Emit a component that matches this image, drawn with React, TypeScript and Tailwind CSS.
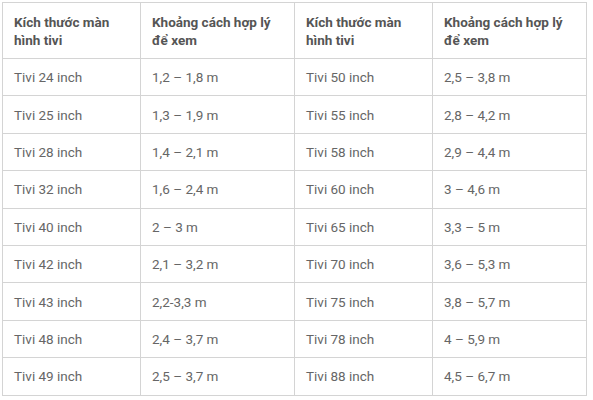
const rows: [string, string, string, string][] = [
  ["Tivi 24 inch", "1,2 – 1,8 m", "Tivi 50 inch", "2,5 – 3,8 m"],
  ["Tivi 25 inch", "1,3 – 1,9 m", "Tivi 55 inch", "2,8 – 4,2 m"],
  ["Tivi 28 inch", "1,4 – 2,1 m", "Tivi 58 inch", "2,9 – 4,4 m"],
  ["Tivi 32 inch", "1,6 – 2,4 m", "Tivi 60 inch", "3 – 4,6 m"],
  ["Tivi 40 inch", "2 – 3 m", "Tivi 65 inch", "3,3 – 5 m"],
  ["Tivi 42 inch", "2,1 – 3,2 m", "Tivi 70 inch", "3,6 – 5,3 m"],
  ["Tivi 43 inch", "2,2-3,3 m", "Tivi 75 inch", "3,8 – 5,7 m"],
  ["Tivi 48 inch", "2,4 – 3,7 m", "Tivi 78 inch", "4 – 5,9 m"],
  ["Tivi 49 inch", "2,5 – 3,7 m", "Tivi 88 inch", "4,5 – 6,7 m"],
];

const headers = ["Kích thước màn hình tivi", "Khoảng cách hợp lý để xem", "Kích thước màn hình tivi", "Khoảng cách hợp lý để xem"];

export default function App() {
  return (
    <div className="w-[593px] h-[400px] bg-white pl-[2px] pt-[2px] [font-family:Roboto,'Liberation_Sans',sans-serif]">
      <table className="w-[585px] table-fixed border-collapse text-[13.5px]">
        <colgroup>
          <col className="w-[138px]" />
          <col className="w-[154px]" />
          <col className="w-[138px]" />
          <col className="w-[154px]" />
        </colgroup>
        <thead>
          <tr className="h-[56px]">
            {headers.map((h, i) => (
              <th key={i} className="border border-[#d4d4d4] px-[11px] pr-[16px] text-left align-middle font-bold leading-[18px] text-[#555]">
                {h}
              </th>
            ))}
          </tr>
        </thead>
        <tbody>
          {rows.map((r, i) => (
            <tr key={i} className="h-[37.4px]">
              {r.map((c, j) => (
                <td key={j} className="border border-[#d4d4d4] px-[11px] align-middle leading-[18px] text-[#666]">
                  {c}
                </td>
              ))}
            </tr>
          ))}
        </tbody>
      </table>
    </div>
  );
}
